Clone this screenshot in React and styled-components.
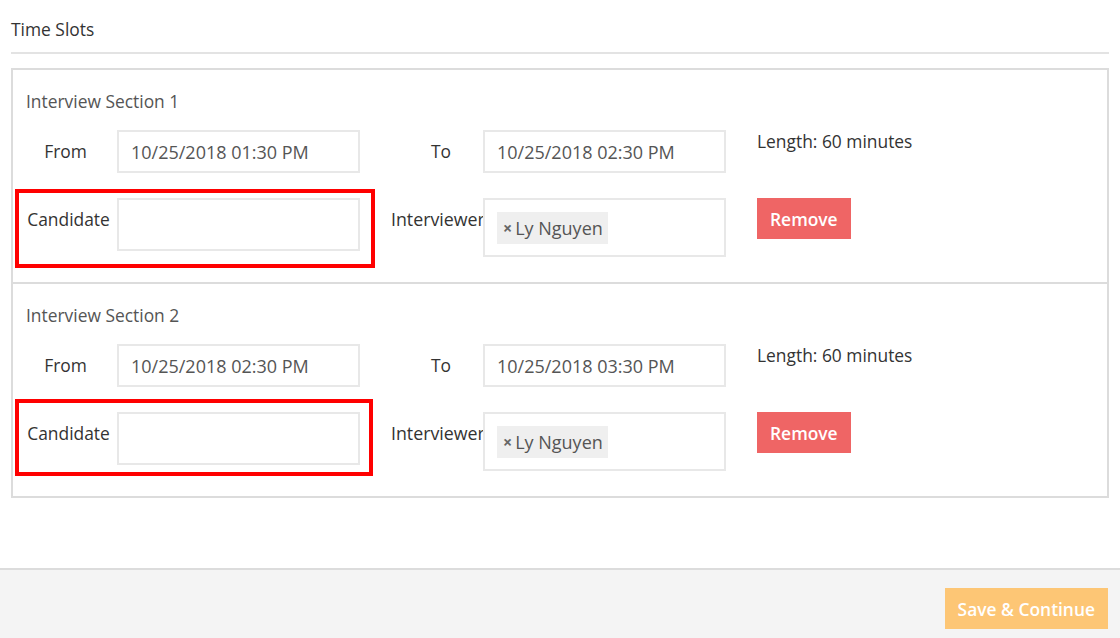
import React from 'react';
import styled, { createGlobalStyle } from 'styled-components';

const GlobalStyle = createGlobalStyle`
  html, body {
    margin: 0;
    padding: 0;
    background: #fff;
    font-family: "Open Sans", "Noto Sans", sans-serif;
    font-size: 17.4px;
    color: #333;
  }
  * {
    box-sizing: border-box;
  }
`;

const Page = styled.div`
  display: flex;
  flex-direction: column;
  height: 100vh;
  overflow: hidden;
`;

const Content = styled.div`
  flex: 1;
  padding: 18px 11px 0 11px;
`;

const Title = styled.div`
  line-height: 22px;
  padding-bottom: 12px;
  border-bottom: 2px solid #e3e3e3;
  color: #333;
`;

const SlotBox = styled.div`
  margin-top: 14px;
  border: 2px solid #dcdcdc;
`;

const Section = styled.div`
  padding: 20px 13px 25px 13px;
  & + & {
    border-top: 2px solid #dcdcdc;
  }
`;

const SectionTitle = styled.div`
  line-height: 22px;
  color: #555;
  margin-bottom: 18px;
`;

const Grid = styled.div`
  display: grid;
  grid-template-columns: 91px 274px 92px 274px 1fr;
  row-gap: 25px;
  align-items: start;
`;

const Label = styled.div`
  padding: 10px ${p => p.pr ?? 6}px 0 ${p => p.pl ?? 0}px;
  line-height: 22px;
  text-align: center;
  white-space: nowrap;
  overflow: hidden;
  color: #333;
  font-size: ${p => p.size || 17.4}px;
`;

const Field = styled.div`
  position: relative;
  width: 243px;
  height: ${p => p.height}px;
  border: 2px solid #e8e8e8;
  background: #fff;
  padding: 0 12px;
  line-height: ${p => p.height - 2}px;
  font-size: 18px;
  color: #555;
`;

const TagField = styled(Field)`
  display: flex;
  align-items: flex-start;
  padding: 12px;
  line-height: normal;
`;

const Highlight = styled.div`
  grid-column: span 2;
  width: 334px;
  display: grid;
  grid-template-columns: 91px 243px;
  position: relative;
  &::after {
    content: '';
    position: absolute;
    top: -${p => p.top}px;
    left: -11px;
    right: -${p => p.right}px;
    bottom: -${p => p.bottom}px;
    border: 4px solid #ff0000;
    pointer-events: none;
  }
`;

const Tag = styled.span`
  display: inline-flex;
  align-items: center;
  height: 32px;
  padding: 0 5px 0 6px;
  background: #efefef;
  color: #555;
  font-size: 18px;
`;

const TagX = styled.span`
  font-size: 16px;
  font-weight: 700;
  color: #666;
  margin-right: 3px;
`;

const Info = styled.div`
  line-height: 22px;
  color: #333;
`;

const Button = styled.button`
  border: none;
  outline: none;
  cursor: pointer;
  height: 41px;
  padding: 0 ${p => p.pad || 13}px;
  background: ${p => p.color};
  color: #fff;
  font-family: "Open Sans", "Noto Sans", sans-serif;
  font-size: 17.4px;
  font-weight: 600;
`;

const Footer = styled.div`
  height: 70px;
  flex-shrink: 0;
  border-top: 2px solid #dcdcdc;
  background: #f4f4f4;
  display: flex;
  justify-content: flex-end;
  align-items: flex-start;
  padding: 18px 12px 0 0;
`;

const slots = [
  {
    name: 'Interview Section 1',
    from: '10/25/2018 01:30 PM',
    to: '10/25/2018 02:30 PM',
    box: { top: 9, right: 15, bottom: 17 }
  },
  {
    name: 'Interview Section 2',
    from: '10/25/2018 02:30 PM',
    to: '10/25/2018 03:30 PM',
    box: { top: 13, right: 13, bottom: 11 }
  }
];

const Slot = ({ slot }) => (
  <Section>
    <SectionTitle>{slot.name}</SectionTitle>
    <Grid>
      <Label pr={12}>From</Label>
      <Field height={43}>{slot.from}</Field>
      <Label pl={8} pr={0}>To</Label>
      <Field height={43}>{slot.to}</Field>
      <Info>Length: 60 minutes</Info>

      <Highlight {...slot.box}>
        <Label>Candidate</Label>
        <Field height={53} />
      </Highlight>
      <Label pr={0} size={17.8}>Interviewer</Label>
      <TagField height={59}>
        <Tag>
          <TagX>×</TagX>Ly Nguyen
        </Tag>
      </TagField>
      <div>
        <Button color="#ef6565">Remove</Button>
      </div>
    </Grid>
  </Section>
);

export default function App() {
  return (
    <Page>
      <GlobalStyle />
      <Content>
        <Title>Time Slots</Title>
        <SlotBox>
          {slots.map(s => (
            <Slot key={s.name} slot={s} />
          ))}
        </SlotBox>
      </Content>
      <Footer>
        <Button color="#fdc675" pad={13}>Save &amp; Continue</Button>
      </Footer>
    </Page>
  );
}
